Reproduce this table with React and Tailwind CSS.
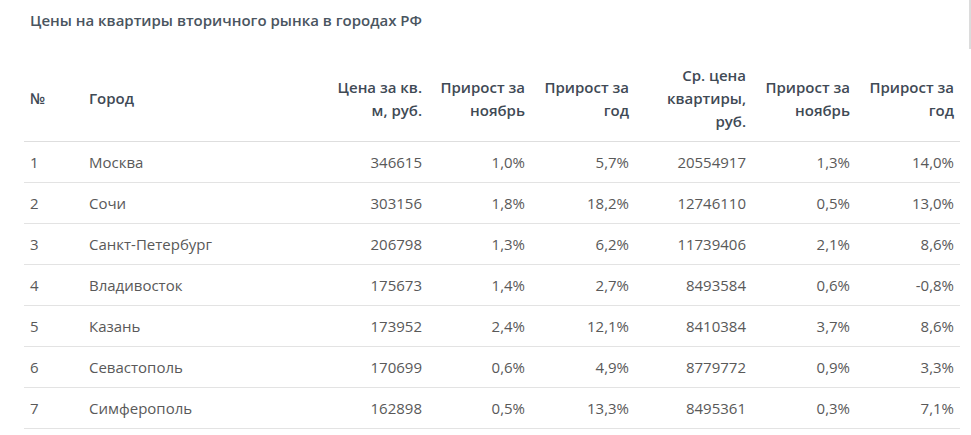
import React from 'react';

const rows = [
  ['1', 'Москва', '346615', '1,0%', '5,7%', '20554917', '1,3%', '14,0%'],
  ['2', 'Сочи', '303156', '1,8%', '18,2%', '12746110', '0,5%', '13,0%'],
  ['3', 'Санкт-Петербург', '206798', '1,3%', '6,2%', '11739406', '2,1%', '8,6%'],
  ['4', 'Владивосток', '175673', '1,4%', '2,7%', '8493584', '0,6%', '-0,8%'],
  ['5', 'Казань', '173952', '2,4%', '12,1%', '8410384', '3,7%', '8,6%'],
  ['6', 'Севастополь', '170699', '0,6%', '4,9%', '8779772', '0,9%', '3,3%'],
  ['7', 'Симферополь', '162898', '0,5%', '13,3%', '8495361', '0,3%', '7,1%'],
];

const App = () => {
  return (
    <div className="relative min-h-screen bg-white font-['Open_Sans',sans-serif] text-[15px]">
      <div className="absolute right-0 top-0 h-[49px] w-[2px] bg-[#dcdcdc]" />
      <div className="pl-6 pr-[11px] pt-[9px]">
        <h2 className="pl-[6px] text-[15px] font-semibold leading-[23px] text-[#4a5560]">
          Цены на квартиры вторичного рынка в городах РФ
        </h2>

        <table className="mt-[23px] w-[936px] table-fixed border-collapse">
          <colgroup>
            <col className="w-[59px]" />
            <col className="w-[247px]" />
            <col className="w-[98px]" />
            <col className="w-[103px]" />
            <col className="w-[104px]" />
            <col className="w-[117px]" />
            <col className="w-[104px]" />
            <col className="w-[104px]" />
          </colgroup>
          <thead>
            <tr className="border-b border-[#dedede] text-[15px] font-semibold leading-[23px] text-[#3f4a55]">
              <th className="px-[6px] pt-[9px] pb-[8px] text-left align-middle font-semibold">№</th>
              <th className="px-[6px] pt-[9px] pb-[8px] text-left align-middle font-semibold">Город</th>
              <th className="px-[6px] pt-[9px] pb-[8px] text-right align-middle font-semibold whitespace-nowrap">
                Цена за кв.<br />м, руб.
              </th>
              <th className="px-[6px] pt-[9px] pb-[8px] text-right align-middle font-semibold whitespace-nowrap">
                Прирост за<br />ноябрь
              </th>
              <th className="px-[6px] pt-[9px] pb-[8px] text-right align-middle font-semibold whitespace-nowrap">
                Прирост за<br />год
              </th>
              <th className="px-[6px] pt-[9px] pb-[8px] text-right align-middle font-semibold whitespace-nowrap">
                Ср. цена<br />квартиры,<br />руб.
              </th>
              <th className="px-[6px] pt-[9px] pb-[8px] text-right align-middle font-semibold whitespace-nowrap">
                Прирост за<br />ноябрь
              </th>
              <th className="px-[6px] pt-[9px] pb-[8px] text-right align-middle font-semibold whitespace-nowrap">
                Прирост за<br />год
              </th>
            </tr>
          </thead>
          <tbody>
            {rows.map((r) => (
              <tr key={r[0]} className="border-b border-[#e3e3e3] leading-[23px] text-[#595959]">
                <td className="h-[41px] px-[6px] text-left">{r[0]}</td>
                <td className="h-[41px] px-[6px] text-left">{r[1]}</td>
                {r.slice(2).map((v, i) => (
                  <td key={i} className="h-[41px] px-[6px] text-right">{v}</td>
                ))}
              </tr>
            ))}
          </tbody>
        </table>
      </div>
    </div>
  );
};

export default App;
